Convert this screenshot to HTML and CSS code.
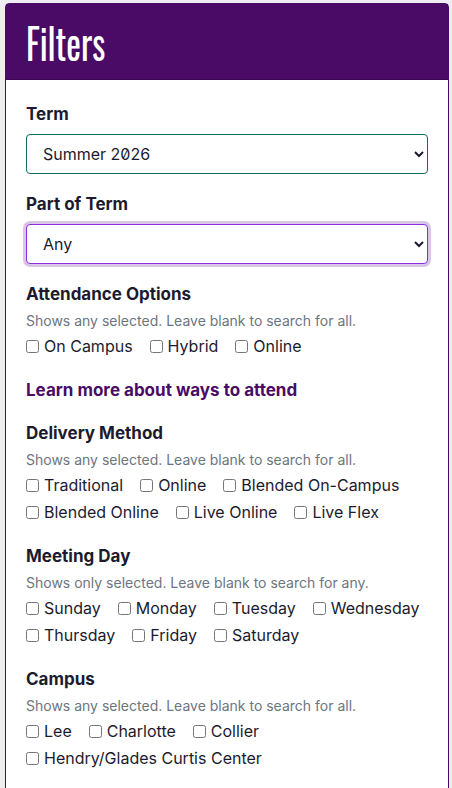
FILE: index.html
```html
<!DOCTYPE html>
<html lang="en">
  <head>
    <meta charset="UTF-8" />
    <title>Filters</title>
    <link rel="stylesheet" href="styles.css">
  </head>
  <body>
    <div class="card">
      <div class="card-header">
        <h2>Filters</h2>
      </div>
      <div class="card-body">
        <div class="group">
          <label class="label" for="term">Term</label>
          <select id="term" class="select select-term">
            <option>Summer 2026</option>
          </select>
        </div>

        <div class="group">
          <label class="label" for="part">Part of Term</label>
          <select id="part" class="select select-focus">
            <option>Any</option>
          </select>
        </div>

        <div class="group group-checks">
          <div class="label with-help">Attendance Options</div>
          <div class="help">Shows any selected. Leave blank to search for all.</div>
          <div class="checks">
            <label class="check"><input type="checkbox" /> On Campus</label>
            <label class="check"><input type="checkbox" /> Hybrid</label>
            <label class="check"><input type="checkbox" /> Online</label>
          </div>
        </div>

        <a class="learn" href="#">Learn more about ways to attend</a>

        <div class="group group-checks">
          <div class="label with-help">Delivery Method</div>
          <div class="help">Shows any selected. Leave blank to search for all.</div>
          <div class="checks">
            <label class="check"><input type="checkbox" /> Traditional</label>
            <label class="check"><input type="checkbox" /> Online</label>
            <label class="check"><input type="checkbox" /> Blended On-Campus</label>
            <label class="check"><input type="checkbox" /> Blended Online</label>
            <label class="check"><input type="checkbox" /> Live Online</label>
            <label class="check"><input type="checkbox" /> Live Flex</label>
          </div>
        </div>

        <div class="group group-checks">
          <div class="label with-help">Meeting Day</div>
          <div class="help">Shows only selected. Leave blank to search for any.</div>
          <div class="checks">
            <label class="check"><input type="checkbox" /> Sunday</label>
            <label class="check"><input type="checkbox" /> Monday</label>
            <label class="check"><input type="checkbox" /> Tuesday</label>
            <label class="check"><input type="checkbox" /> Wednesday</label>
            <label class="check"><input type="checkbox" /> Thursday</label>
            <label class="check"><input type="checkbox" /> Friday</label>
            <label class="check"><input type="checkbox" /> Saturday</label>
          </div>
        </div>

        <div class="group group-checks">
          <div class="label with-help">Campus</div>
          <div class="help">Shows any selected. Leave blank to search for all.</div>
          <div class="checks">
            <label class="check"><input type="checkbox" /> Lee</label>
            <label class="check"><input type="checkbox" /> Charlotte</label>
            <label class="check"><input type="checkbox" /> Collier</label>
            <label class="check"><input type="checkbox" /> Hendry/Glades Curtis Center</label>
          </div>
        </div>
      </div>
    </div>
  </body>
</html>
```

FILE: styles.css
```css
body {
  margin: 0;
  background: #efedf1;
  font-family: Inter, "Noto Sans", sans-serif;
  font-size: 16px;
  color: #1c1b2e;
}

.card {
  margin: 3px 3px 0 5px;
  background: #fff;
  border: 1px solid #4a0b66;
  border-radius: 4px 4px 0 0;
  min-height: 800px;
}

.card-header {
  background: #4a0b66;
  height: 75px;
  padding: 0 20px;
  border-bottom: 1px solid #3b0852;
  display: flex;
  align-items: center;
}

.card-header h2 {
  margin: 0;
  color: #fff;
  font-family: Oswald, "Liberation Sans Narrow", "DejaVu Sans Condensed", sans-serif;
  font-stretch: condensed;
  font-weight: normal;
  font-size: 42px;
  transform: scaleX(0.83);
  transform-origin: left center;
}

.card-body {
  padding: 22px 20px 0 20px;
}

.group {
  margin-bottom: 18px;
}

.group-checks {
  margin-bottom: 20px;
}

.label {
  display: block;
  font-size: 17px;
  font-weight: 700;
  line-height: 24px;
  margin-bottom: 8px;
}

.label.with-help {
  margin-bottom: 3px;
}

.select {
  display: block;
  width: 100%;
  height: 40px;
  padding: 0 12px 0 12px;
  font-family: Inter, "Noto Sans", sans-serif;
  font-size: 16px;
  color: #1c1b2e;
  background: #fff;
  border-radius: 4px;
  font-feature-settings: "zero";
}

.select-term {
  border: 1px solid #0b6e63;
}

.select-focus {
  border: 1px solid #8a2be2;
  box-shadow: 0 0 0 3px #d9c6e6;
  outline: none;
}

.help {
  color: #6c7580;
  font-size: 14px;
  line-height: 24px;
}

.checks {
  display: flex;
  flex-wrap: wrap;
  column-gap: 17px;
  row-gap: 3px;
  margin-top: 1px;
}

.check {
  display: flex;
  align-items: center;
  line-height: 24px;
  white-space: nowrap;
}

.check input {
  width: 13px;
  height: 13px;
  margin: 0 5px 0 0;
}

.learn {
  display: block;
  color: #4a0b66;
  font-size: 17px;
  font-weight: 700;
  text-decoration: none;
  line-height: 24px;
  margin: 11px 0 19px;
}
```
